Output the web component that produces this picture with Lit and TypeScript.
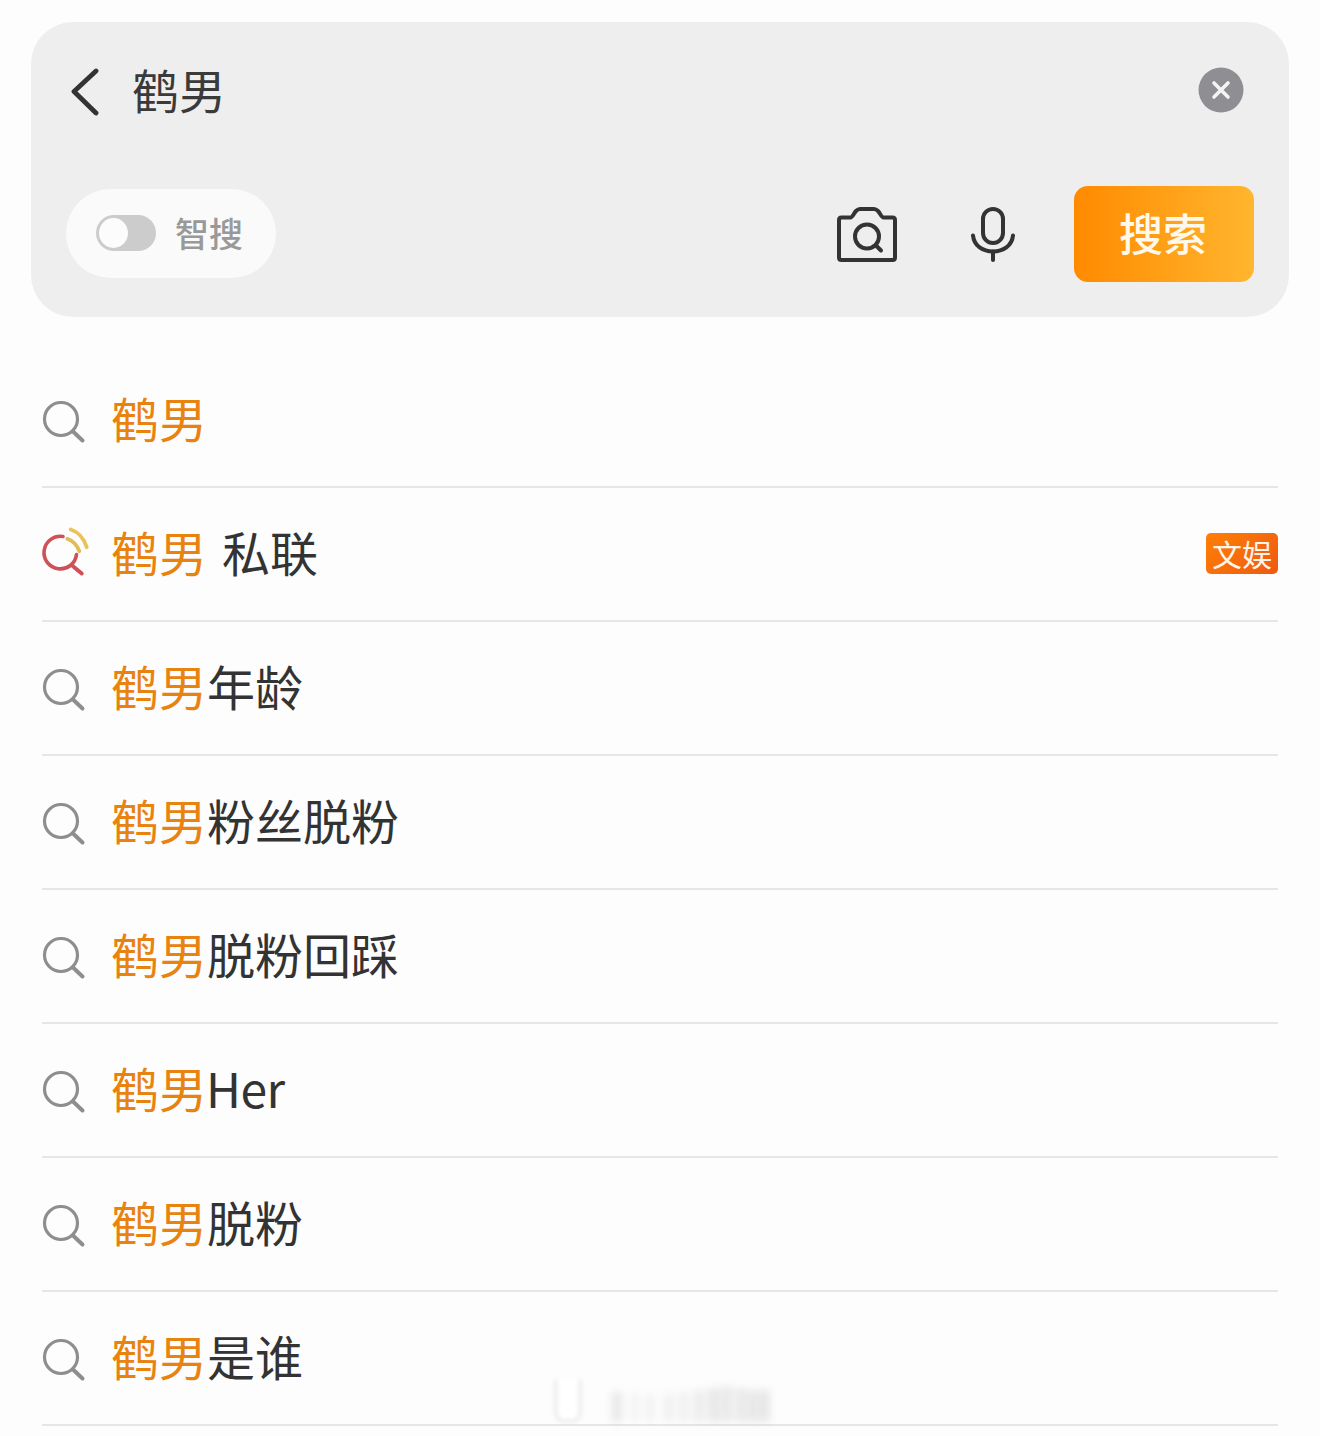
import { LitElement, html, css } from "lit";
import { customElement } from "lit/decorators.js";

const rows: { rest: string; hot?: boolean; tag?: string; latin?: boolean }[] = [
  { rest: "" },
  { rest: "私联", hot: true, tag: "文娱" },
  { rest: "年龄" },
  { rest: "粉丝脱粉" },
  { rest: "脱粉回踩" },
  { rest: "Her", latin: true },
  { rest: "脱粉" },
  { rest: "是谁" },
];

const smudges: [number, number, number, number][] = [
  [612, 10, 0.2, 30], [632, 6, 0.12, 30], [647, 6, 0.15, 28], [664, 10, 0.12, 28],
  [680, 8, 0.14, 30], [694, 10, 0.17, 32], [708, 12, 0.2, 34], [722, 10, 0.2, 36],
  [736, 10, 0.2, 34], [748, 10, 0.22, 32], [760, 9, 0.24, 32],
];

@customElement("app-root")
export class AppRoot extends LitElement {
  static styles = css`
    :host {
      display: block;
      position: relative;
      width: 1320px;
      height: 1436px;
      overflow: hidden;
      background: #fdfdfd;
      font-family: "Noto Sans CJK SC", "Noto Sans", sans-serif;
      color: #333;
    }
    .card {
      margin: 22px 31px 0;
      height: 295px;
      box-sizing: border-box;
      padding: 45px 35px 35px;
      background: #eeeeee;
      border-radius: 42px;
      display: flex;
      flex-direction: column;
      justify-content: space-between;
    }
    .top {
      display: flex;
      align-items: center;
      height: 46px;
      padding: 0 10px 0 4px;
    }
    .back { width: 30px; height: 48px; flex: none; margin-top: 4px; }
    .query {
      margin-left: 32px;
      font-size: 47px;
      line-height: 46px;
      flex: 1;
      color: #3a3a3a;
      margin-bottom: 2px;
    }
    .clear { width: 46px; height: 46px; flex: none; }
    .bottom { display: flex; align-items: center; }
    .pill {
      width: 210px;
      height: 89px;
      box-sizing: border-box;
      border-radius: 45px;
      background: #fafafa;
      padding-left: 30px;
      display: flex;
      align-items: center;
      gap: 19px;
      margin-bottom: 2px;
    }
    .toggle {
      width: 60px;
      height: 36px;
      box-sizing: border-box;
      border-radius: 18px;
      background: #cccccc;
      padding: 3px;
      flex: none;
    }
    .knob {
      width: 29px;
      height: 30px;
      border-radius: 50%;
      background: #fcfcfc;
    }
    .pill span { font-size: 34px; line-height: 40px; color: #999999; font-weight: 500; }
    .spacer { flex: 1; }
    .camera { width: 60px; height: 55px; flex: none; }
    .mic { width: 44px; height: 55px; margin-left: 74px; flex: none; }
    .go {
      width: 180px;
      height: 96px;
      margin-left: 59px;
      border-radius: 14px;
      background: linear-gradient(90deg, #ff8a00, #ffb62e);
      color: #fff9ec;
      font-size: 44px;
      font-weight: 500;
      display: flex;
      align-items: center;
      justify-content: center;
      flex: none;
      box-sizing: border-box;
      padding: 0 2px 4px 0;
    }
    .list { margin: 37px 42px 0; }
    .row {
      height: 134px;
      box-sizing: border-box;
      border-bottom: 2px solid #e6e6e6;
      display: flex;
      align-items: center;
    }
    .ico { width: 46px; height: 46px; flex: none; margin-top: 6px; overflow: visible; }
    .txt {
      margin-left: 23px;
      font-size: 48px;
      line-height: 60px;
      flex: 1;
      color: #333;
      white-space: pre;
      margin-bottom: 6px;
    }
    .txt b { font-weight: 400; color: #e8830f; }
    .gap { margin-left: 15px; }
    .latin { margin-left: -1px; letter-spacing: -0.5px; }
    .tag {
      width: 72px;
      height: 41px;
      border-radius: 5px;
      background: linear-gradient(135deg, #ff7f05, #ee5a12);
      color: #fff5ea;
      font-size: 30px;
      line-height: 41px;
      text-align: center;
      flex: none;
      margin-bottom: 2px;
    }
    .mark {
      position: absolute;
      left: 0;
      top: 0;
      width: 100%;
      height: 100%;
      pointer-events: none;
    }
    .smudge {
      position: absolute;
      background: #8f8f8f;
      filter: blur(4px);
    }
    .cup {
      position: absolute;
      left: 555px;
      top: 1380px;
      width: 26px;
      height: 42px;
      box-sizing: border-box;
      background: #ffffff;
      border: 2px solid #dfdfdf;
      border-top: none;
      border-radius: 0 0 9px 9px;
      filter: blur(2px);
    }
  `;

  private searchIcon() {
    return html`<svg class="ico" viewBox="0 0 46 46" fill="none" stroke="#8e8e8e" stroke-width="3.2" stroke-linecap="round">
      <circle cx="19" cy="19" r="16.5"></circle>
      <path d="M31 31.5 40.5 40.5" stroke-width="4"></path>
    </svg>`;
  }

  private hotIcon() {
    return html`<svg class="ico" viewBox="0 0 46 46" fill="none" stroke-linecap="round">
      <path d="M21 2.500A16.300 16.300 0 1 0 34.500 20.500" stroke="#cf5057" stroke-width="3.600"></path>
      <path d="M30.700 32 39.700 39.500" stroke="#cf5057" stroke-width="4"></path>
      <path d="M25.300 4.800C30 6.500 35 11 37.300 17.200" stroke="#e3bc55" stroke-width="3.800"></path>
      <path d="M28.700 -4.500C35 -2.500 41.500 3 44.700 13.200" stroke="#e9c25a" stroke-width="3.800"></path>
    </svg>`;
  }

  private rest(r: { rest: string; hot?: boolean; latin?: boolean }) {
    if (r.hot) return html`<span class="gap">${r.rest}</span>`;
    if (r.latin) return html`<span class="latin">${r.rest}</span>`;
    return r.rest;
  }

  render() {
    return html`
      <div class="card">
        <div class="top">
          <svg class="back" viewBox="0 0 30 48" fill="none" stroke="#333" stroke-width="4.800" stroke-linecap="round" stroke-linejoin="round">
            <path d="M26 3 4 23.500 26 45"></path>
          </svg>
          <div class="query">鹤男</div>
          <svg class="clear" viewBox="0 0 46 46">
            <circle cx="23" cy="23" r="22.500" fill="#8f8f93"></circle>
            <path d="M16 16 30 30M30 16 16 30" stroke="#f4f4f4" stroke-width="3.600" stroke-linecap="round"></path>
          </svg>
        </div>
        <div class="bottom">
          <div class="pill">
            <div class="toggle"><div class="knob"></div></div>
            <span>智搜</span>
          </div>
          <div class="spacer"></div>
          <svg class="camera" viewBox="0 0 60 55" fill="none" stroke="#333" stroke-width="4" stroke-linejoin="round" stroke-linecap="round">
            <path d="M4.500 10.500H13.500C15.500 10.500 17 6 19 4 20 3 21 2 23 2H37C39 2 40 3 41 4 43 6 44.500 10.500 46.500 10.500H55.500C57 10.500 58 11.500 58 13V50.500C58 52 57 53 55.500 53H4.500C3 53 2 52 2 50.500V13C2 11.500 3 10.500 4.500 10.500Z"></path>
            <circle cx="30" cy="29.500" r="12"></circle>
            <path d="M39 38.500 44 43.500"></path>
          </svg>
          <svg class="mic" viewBox="0 0 44 55" fill="none" stroke="#333" stroke-width="4" stroke-linecap="round">
            <rect x="12" y="2" width="20" height="34" rx="10"></rect>
            <path d="M2 28.500C3 39 12 44.500 22 44.500 32 44.500 41 39 42 28.500"></path>
            <path d="M22 44.500V53"></path>
          </svg>
          <div class="go">搜索</div>
        </div>
      </div>
      <div class="list">
        ${rows.map(
          (r) => html`<div class="row">
            ${r.hot ? this.hotIcon() : this.searchIcon()}
            <div class="txt"><b>鹤男</b>${this.rest(r)}</div>
            ${r.tag ? html`<div class="tag">${r.tag}</div>` : ""}
          </div>`
        )}
      </div>
      <div class="mark">
        <div class="cup"></div>
        ${smudges.map(
          ([x, w, o, h]) =>
            html`<div class="smudge" style="left:${x}px;top:${1422 - h}px;width:${w}px;height:${h}px;opacity:${o}"></div>`
        )}
      </div>
    `;
  }
}
